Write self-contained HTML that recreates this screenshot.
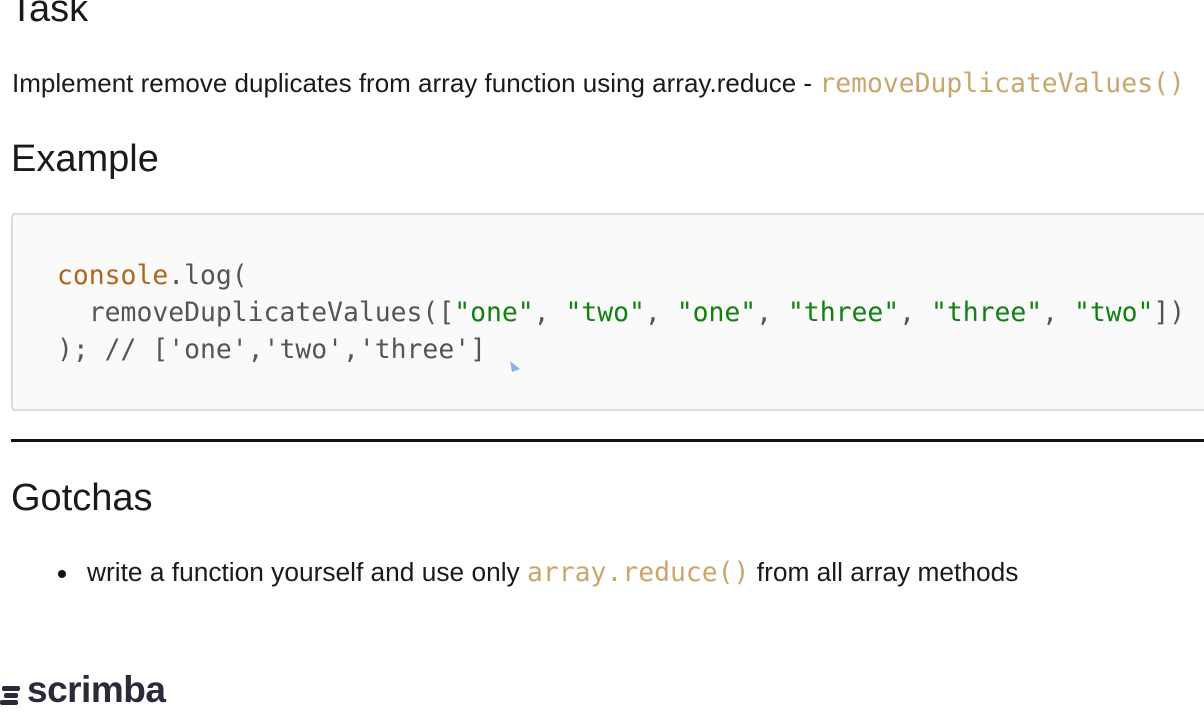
<!DOCTYPE html>
<html><head><meta charset="utf-8"><style>
html,body{margin:0;padding:0;width:1204px;height:728px;overflow:hidden;background:#fff;position:relative}
.s{font-family:"Liberation Sans",sans-serif;color:#1a1a1a;position:absolute;white-space:nowrap;margin:0}
.m{font-family:"DejaVu Sans Mono","Liberation Mono",monospace;font-size:26.4px}
.ic{color:#c9a66b}
.box{position:absolute;left:11px;top:213px;width:1210px;height:194px;border:2px solid #dcdcdc;border-radius:4px;background:#fafafa}
.code{position:absolute;left:57px;top:257px;line-height:37px;color:#555;white-space:pre;margin:0}
.k{color:#b0661a}.g{color:#108010}
</style></head><body>
<div class="s" style="left:10px;top:-12px;font-size:38px">Task</div>
<div class="s" style="left:12px;top:68px;font-size:26px">Implement remove duplicates from array function using array.reduce - <span class="m ic">removeDuplicateValues()</span></div>
<div class="s" style="left:11px;top:138px;font-size:38px">Example</div>
<div class="box"></div>
<pre class="code m"><span class="k">console</span>.log(
  removeDuplicateValues([<span class="g">"one"</span>, <span class="g">"two"</span>, <span class="g">"one"</span>, <span class="g">"three"</span>, <span class="g">"three"</span>, <span class="g">"two"</span>])
); // ['one','two','three']</pre>
<svg style="position:absolute;left:508px;top:360px" width="14" height="16"><path d="M2 1 L12 9 L4 12 Z" fill="#8fb0f0"/></svg>
<div style="position:absolute;left:11px;top:439px;width:1200px;height:3px;background:#111"></div>
<div class="s" style="left:11px;top:477px;font-size:38px">Gotchas</div>
<div style="position:absolute;left:58px;top:570px;width:8px;height:8px;border-radius:50%;background:#111"></div>
<div class="s" style="left:87px;top:557px;font-size:26.3px">write a function yourself and use only <span class="m ic">array.reduce()</span> from all array methods</div>
<div style="position:absolute;left:0;top:684px">
<div style="position:absolute;left:2px;top:2px;width:18px;height:5px;background:#2a2a3a;border-radius:2px"></div>
<div style="position:absolute;left:4px;top:9px;width:14px;height:5px;background:#2a2a3a;border-radius:2px"></div>
<div style="position:absolute;left:0;top:16px;width:18px;height:5px;background:#2a2a3a;border-radius:2px"></div>
</div>
<div class="s" style="left:27px;top:669px;font-size:37px;font-weight:bold;color:#2a2a3a;letter-spacing:-0.5px">scrimba</div>
</body></html>
